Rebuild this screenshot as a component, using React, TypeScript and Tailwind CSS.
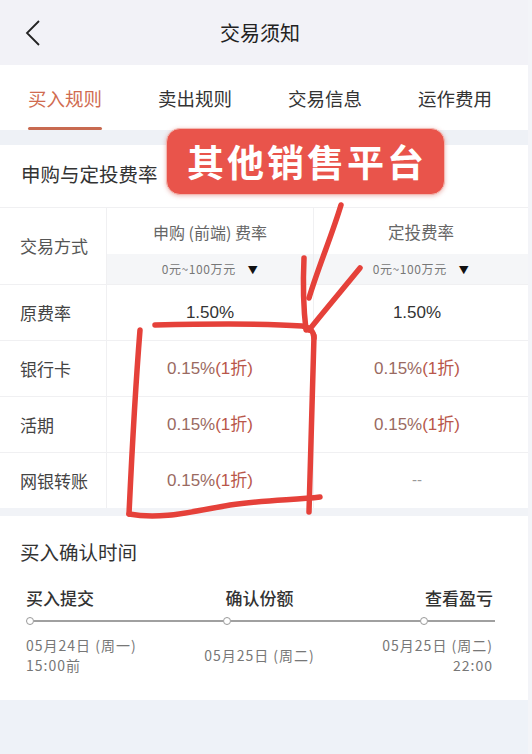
import React from "react";

const rows: { label: string; a: string; b: string; red: boolean }[] = [
  { label: "原费率", a: "1.50%", b: "1.50%", red: false },
  { label: "银行卡", a: "0.15%(1折)", b: "0.15%(1折)", red: true },
  { label: "活期", a: "0.15%(1折)", b: "0.15%(1折)", red: true },
  { label: "网银转账", a: "0.15%(1折)", b: "--", red: true },
];

function Fee({ v, red }: { v: string; red: boolean }) {
  if (v === "--") return <span className="text-[#999] text-[15px]">--</span>;
  if (!red) return <span className="text-[#333]">{v}</span>;
  return (
    <span>
      <span className="text-[#9a6a62]">0.15%</span>
      <span className="text-[#b9574a]">(1折)</span>
    </span>
  );
}

export default function App() {
  return (
    <div
      className="relative w-[532px] h-[754px] overflow-hidden bg-[#eef2f8] flex"
      style={{ fontFamily: '"Noto Sans CJK SC", "Noto Sans", sans-serif' }}
    >
      <div className="w-[528px] flex flex-col">
        {/* header */}
        <div className="h-[65px] bg-[#f2f2f7] grid grid-cols-[60px_400px_60px] items-center">
          <div className="pl-[24px] flex items-center">
            <svg width="18" height="28" viewBox="0 0 18 28">
              <polyline points="15,2 3,14 15,26" fill="none" stroke="#222" strokeWidth="1.8" strokeLinejoin="miter" />
            </svg>
          </div>
          <div className="text-center text-[20px] text-[#222] leading-[28px]">交易须知</div>
          <div />
        </div>
        {/* tabs */}
        <div className="h-[65px] bg-white grid grid-cols-[130px_130px_130px_130px]">
          {["买入规则", "卖出规则", "交易信息", "运作费用"].map((t, i) => (
            <div key={t} className="flex flex-col items-center pt-[20px]">
              <div
                className={
                  "text-[18.5px] leading-[26px] " +
                  (i === 0 ? "text-[#d06b50]" : "text-[#333]")
                }
              >
                {t}
              </div>
              {i === 0 ? (
                <div className="mt-[16px] h-[3px] w-[74px] bg-[#c86a50] rounded-full" />
              ) : null}
            </div>
          ))}
        </div>
        <div className="h-[15px] bg-[#eef1f6]" />
        {/* fees section */}
        <div className="bg-white">
          <div className="pt-[15px] pb-[19px] pl-[21px] text-[19.5px] leading-[28px] text-[#333]">
            申购与定投费率
          </div>
          <div className="border-t border-[#f0f0f2]">
            <div className="grid grid-cols-[107px_206px_215px]">
              <div className="row-span-2 flex items-center pl-[20px] text-[17px] text-[#555] border-r border-[#f0f0f2] h-[76px]">
                交易方式
              </div>
              <div className="h-[46px] flex items-center justify-center text-[16px] text-[#666] pt-[2px]">
                申购 (前端) 费率
              </div>
              <div className="h-[46px] flex items-center justify-center text-[16.5px] text-[#666] border-l border-[#f0f0f2] pt-[2px]">
                定投费率
              </div>
              <div className="h-[30px] bg-[#f5f6f8] flex items-center justify-center gap-[12px] text-[12px] tracking-[0.6px] text-[#777]">
                <span>0元~100万元</span>
                <span className="text-[#111] text-[10px]">▼</span>
              </div>
              <div className="h-[30px] bg-[#f5f6f8] flex items-center justify-center gap-[12px] text-[12px] tracking-[0.6px] text-[#777] border-l border-[#eceef2]">
                <span>0元~100万元</span>
                <span className="text-[#111] text-[10px]">▼</span>
              </div>
            </div>
            {rows.map((r) => (
              <div key={r.label} className="grid grid-cols-[107px_206px_215px] h-[56px] border-t border-[#f0f0f2]">
                <div className="flex items-center pl-[20px] text-[17px] text-[#444] border-r border-[#f0f0f2]">{r.label}</div>
                <div className="flex items-center justify-center text-[17px]" style={{ fontFamily: '"Liberation Sans", "Noto Sans CJK SC", sans-serif' }}>
                  <Fee v={r.a} red={r.red} />
                </div>
                <div className="flex items-center justify-center text-[17px] border-l border-[#f0f0f2] pr-[8px]" style={{ fontFamily: '"Liberation Sans", "Noto Sans CJK SC", sans-serif' }}>
                  <Fee v={r.b} red={r.red} />
                </div>
              </div>
            ))}
          </div>
        </div>
        <div className="h-[8px] bg-[#f1f3f7]" />
        {/* confirm time */}
        <div className="bg-white pt-[22px] pb-[25px] pl-[20px] pr-[35px]">
          <div className="text-[19.5px] leading-[28px] text-[#333]">买入确认时间</div>
          <div className="pl-[6px] mt-[20px]">
            <div className="grid grid-cols-3 text-[17px] leading-[24px] text-[#333] font-medium">
              <div>买入提交</div>
              <div className="text-center">确认份额</div>
              <div className="text-right">查看盈亏</div>
            </div>
            <div className="mt-[6px] h-[10px] flex items-center">
              <div className="w-[8px] h-[8px] rounded-full border border-[#999] bg-white" />
              <div className="w-[189px] h-[1.5px] bg-[#a0a0a0]" />
              <div className="w-[8px] h-[8px] rounded-full border border-[#999] bg-white" />
              <div className="w-[189px] h-[1.5px] bg-[#a0a0a0]" />
              <div className="w-[8px] h-[8px] rounded-full border border-[#999] bg-white" />
              <div className="flex-1 h-[1.5px] bg-[#a0a0a0] mr-[-2px]" />
            </div>
            <div className="mt-[9px] grid grid-cols-3 text-[14px] leading-[20px] tracking-[1px] text-[#777] items-center">
              <div className="whitespace-nowrap">
                <div>05月24日 (周一)</div>
                <div>15:00前</div>
              </div>
              <div className="text-center whitespace-nowrap">05月25日 (周二)</div>
              <div className="text-right whitespace-nowrap">
                <div>05月25日 (周二)</div>
                <div>22:00</div>
              </div>
            </div>
          </div>
        </div>
      </div>
      <div className="w-[4px] bg-[#f3f4f8]" />

      {/* overlay badge */}
      <div className="absolute left-[166px] top-[128px] w-[279px] h-[67px] rounded-[14px] bg-[#e9544b] border-[1.5px] border-[#f3b7b0] shadow-[0_1px_4px_rgba(200,60,50,0.35)] flex items-center justify-center">
        <span className="text-white text-[37px] font-bold tracking-[3px] leading-none pl-[3px]">其他销售平台</span>
      </div>

      {/* hand drawn red marks */}
      <svg
        className="absolute inset-0 pointer-events-none"
        width="532"
        height="754"
        viewBox="0 0 532 754"
      >
        <g fill="none" stroke="#e5413a" strokeWidth="5.5" strokeLinecap="round" strokeLinejoin="round">
          <path d="M341 205 C 332 235, 318 268, 309 298" />
          <path d="M304 258 C 303 280, 303 305, 306 330" />
          <path d="M360 268 C 342 290, 325 310, 309 330" />
          <path d="M155 325 C 200 324, 260 323, 302 326 C 310 327, 314 332, 314 338" />
          <path d="M314 336 C 313 390, 311 450, 309 512" />
          <path d="M140 330 C 136 380, 132 450, 129 514" />
          <path d="M129 514 C 160 520, 190 512, 230 505 C 265 500, 295 500, 320 497" />
        </g>
      </svg>
    </div>
  );
}
